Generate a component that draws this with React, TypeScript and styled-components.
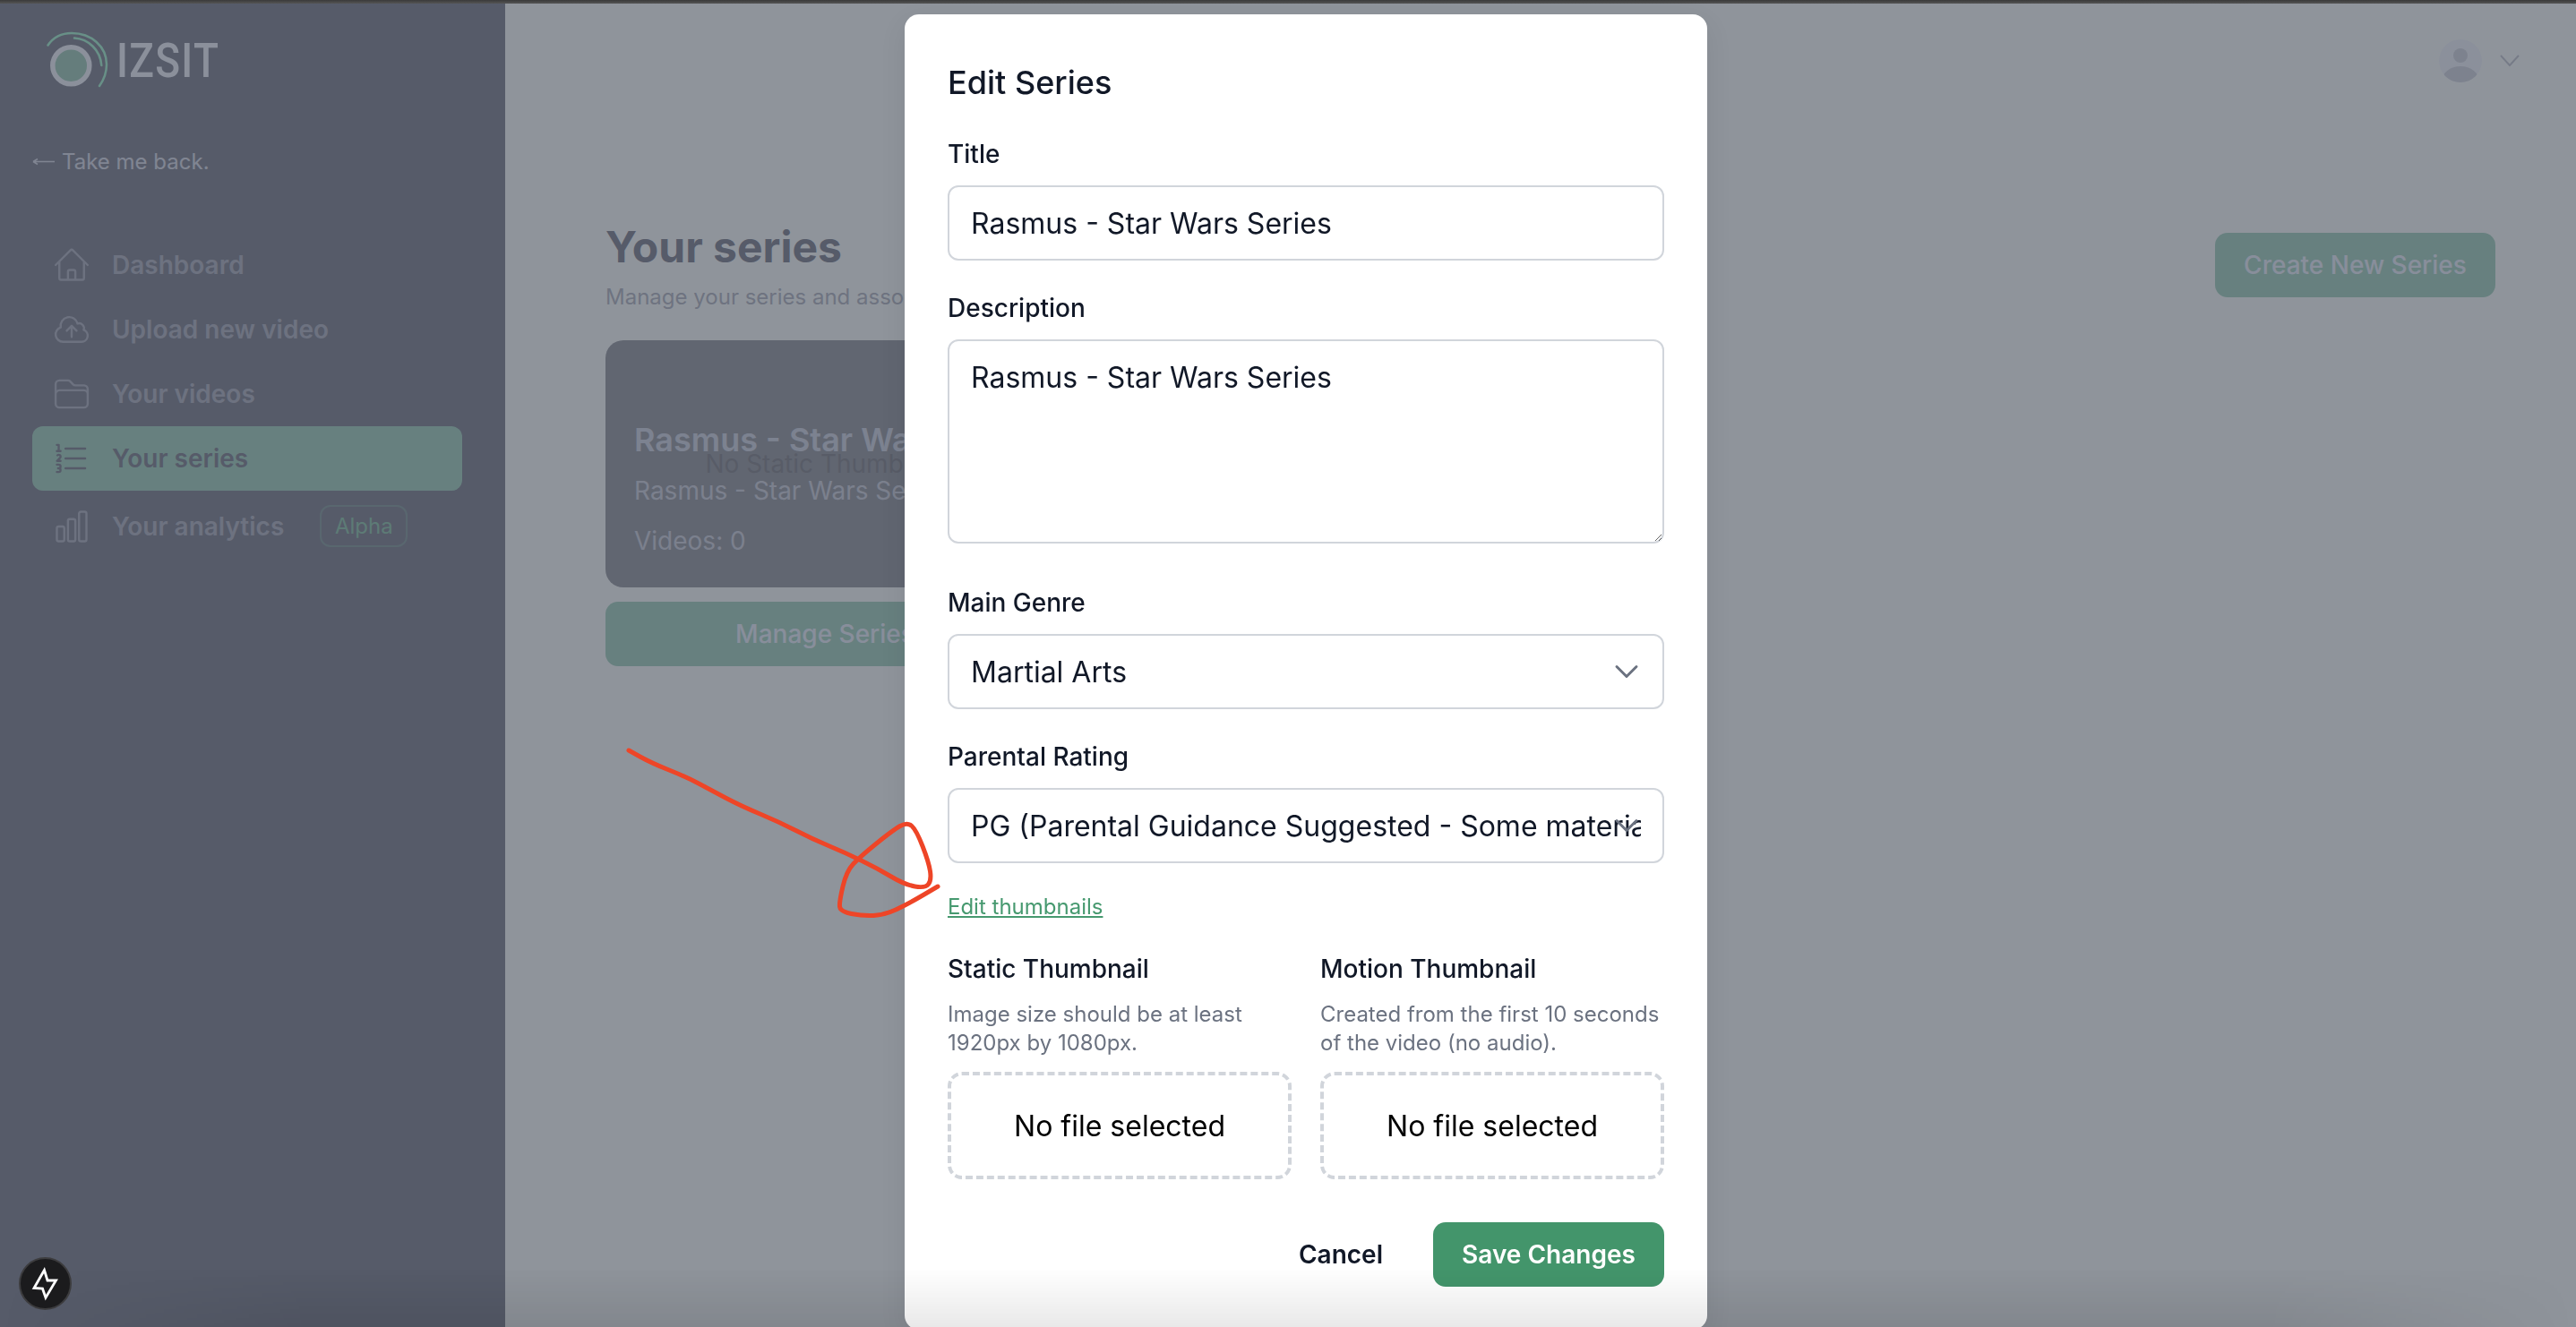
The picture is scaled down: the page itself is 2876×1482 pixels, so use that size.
import styled, { createGlobalStyle } from 'styled-components';
import {
  HiOutlineHome,
  HiOutlineCloudArrowUp,
  HiOutlineFolder,
  HiOutlineNumberedList,
  HiOutlineChartBar,
} from 'react-icons/hi2';
import { ChevronDown } from 'lucide-react';

// page colours sit under a 50% overlay, so they look much lighter here than in the picture
const GlobalStyle = createGlobalStyle`
  html, body {
    margin: 0;
    height: 100%;
    overflow: hidden;
    background: #fff;
    font-family: Inter, "Noto Sans", sans-serif;
  }
  * {
    box-sizing: border-box;
  }
`;

const TopStrip = styled.div`
  height: 4px;
  background: linear-gradient(#3a3a3a, #555);
`;

const Shell = styled.div`
  display: flex;
  height: 1478px;
`;

const Sidebar = styled.aside`
  width: 564px;
  flex-shrink: 0;
  padding: 30px 48px 0 36px;
  background: rgb(141, 141, 155);
`;

const LogoRow = styled.div`
  display: flex;
  align-items: center;
  gap: 8px;
  padding-left: 16px;
  height: 66px;
`;

const LogoText = styled.span`
  display: inline-block;
  font-family: Roboto, sans-serif;
  font-size: 54px;
  font-weight: 500;
  letter-spacing: 1.5px;
  color: rgb(247, 247, 255);
  transform: scaleX(0.85);
  transform-origin: left center;
`;

const BackLink = styled.div`
  display: flex;
  align-items: center;
  gap: 7px;
  margin: 64px 0;
  height: 32px;
  font-size: 24px;
  color: rgb(225, 225, 237);
`;

const NavList = styled.nav`
  display: flex;
  flex-direction: column;
`;

const NavRow = styled.div<{ $active?: boolean }>`
  display: flex;
  align-items: center;
  gap: 23px;
  min-height: 72px;
  padding: 0 22px;
  border-radius: 12px;
  font-size: 28px;
  font-weight: 600;
  background: ${(props) => (props.$active ? 'rgb(175, 215, 199)' : 'transparent')};
  color: ${(props) => (props.$active ? 'rgb(141, 141, 155)' : 'rgb(187, 187, 201)')};

  svg {
    width: 44px;
    height: 44px;
    flex-shrink: 0;
    stroke-width: 1.3;
  }
`;

const AlphaBadge = styled.span`
  display: flex;
  align-items: center;
  justify-content: center;
  width: 98px;
  height: 47px;
  margin: 16px 0 16px 17px;
  border: 2px solid rgb(147, 165, 167);
  border-radius: 12px;
  font-size: 24px;
  font-weight: 400;
  color: rgb(155, 205, 180);
`;

const Main = styled.main`
  flex: 1;
  background: #fff;
`;

const TopBar = styled.div`
  display: flex;
  align-items: center;
  justify-content: flex-end;
  gap: 20px;
  height: 128px;
  padding-right: 63px;
`;

const Content = styled.div`
  padding: 108px 90px 0 112px;
`;

const HeaderRow = styled.div`
  display: flex;
  align-items: center;
  justify-content: space-between;
`;

const PageTitle = styled.h1`
  margin: 0;
  font-size: 48px;
  line-height: 72px;
  font-weight: 700;
  color: rgb(141, 141, 155);
`;

const PageSubtitle = styled.p`
  margin: 4px 0 0;
  font-size: 24px;
  line-height: 32px;
  color: rgb(189, 189, 201);
`;

const GreenButton = styled.button<{ $width: string }>`
  display: block;
  width: ${(props) => props.$width};
  height: 72px;
  border: none;
  border-radius: 14px;
  font-family: inherit;
  font-size: 28px;
  font-weight: 500;
  background: rgb(175, 215, 199);
  color: rgb(241, 243, 255);
`;

const CreateSlot = styled.div`
  margin-top: 4px;
`;

const SeriesCard = styled.div`
  position: relative;
  display: flex;
  flex-direction: column;
  justify-content: flex-end;
  width: 490px;
  height: 276px;
  margin: 32px 0 16px;
  padding: 0 32px 34px;
  border-radius: 20px;
  background: rgb(163, 163, 171);
`;

const NoThumb = styled.div`
  position: absolute;
  inset: 0;
  display: flex;
  align-items: center;
  justify-content: center;
  font-size: 28px;
  color: rgb(145, 143, 151);
`;

const CardTitle = styled.div`
  position: relative;
  font-size: 36px;
  line-height: 44px;
  font-weight: 600;
  color: rgb(217, 219, 233);
  white-space: nowrap;
`;

const CardText = styled.div<{ $gap: number }>`
  position: relative;
  margin-top: ${(props) => props.$gap}px;
  font-size: 28px;
  line-height: 36px;
  color: rgb(215, 215, 227);
  white-space: nowrap;
`;

const Overlay = styled.div`
  position: fixed;
  inset: 4px 0 0;
  display: flex;
  justify-content: center;
  align-items: flex-start;
  padding: 12px 0 0 40px;
  background: rgba(31, 41, 55, 0.5);
`;

const Modal = styled.form`
  width: 896px;
  flex-shrink: 0;
  padding: 48px;
  border-radius: 16px;
  background: #fff;
  box-shadow: 0 10px 30px rgba(0, 0, 0, 0.08);
  color: #111827;
`;

const ModalTitle = styled.h2`
  margin: 0 0 32px;
  font-size: 36px;
  line-height: 56px;
  font-weight: 500;
`;

const Field = styled.div`
  display: flow-root;
  margin-bottom: 33px;
`;

const Label = styled.label`
  display: block;
  margin-bottom: 15px;
  font-size: 28px;
  line-height: 40px;
  font-weight: 500;
`;

const TextInput = styled.input`
  display: block;
  width: 100%;
  height: 84px;
  padding: 0 24px;
  border: 2px solid #d1d5db;
  border-radius: 12px;
  outline: none;
  font-family: inherit;
  font-size: 32px;
  color: #111827;
  background: #fff;
`;

const TextArea = styled.textarea`
  display: block;
  width: 100%;
  height: 228px;
  margin-bottom: 13px;
  padding: 21px 24px;
  border: 2px solid #d1d5db;
  border-radius: 12px;
  outline: none;
  font-family: inherit;
  font-size: 32px;
  line-height: 40px;
  color: #111827;
`;

const SelectWrap = styled.div`
  position: relative;

  svg {
    position: absolute;
    top: 20px;
    right: 20px;
    width: 44px;
    height: 44px;
    color: #6b7280;
    stroke-width: 1.6;
    pointer-events: none;
  }
`;

const Select = styled.select`
  display: block;
  width: 100%;
  height: 84px;
  padding: 0 24px;
  border: 2px solid #d1d5db;
  border-radius: 12px;
  outline: none;
  appearance: none;
  font-family: inherit;
  font-size: 32px;
  color: #111827;
  background: #fff;
`;

const EditLink = styled.a`
  display: block;
  margin-bottom: 33px;
  font-size: 24px;
  line-height: 32px;
  color: #46996f;
  text-decoration: underline;
`;

const ThumbGrid = styled.div`
  display: grid;
  grid-template-columns: 1fr 1fr;
  gap: 32px;
`;

const ThumbLabel = styled.div`
  margin-bottom: 15px;
  font-size: 28px;
  line-height: 40px;
  font-weight: 500;
`;

const ThumbHelp = styled.p`
  margin: 0 0 16px;
  font-size: 24px;
  line-height: 32px;
  color: #6b7280;
`;

const DropZone = styled.div`
  display: flex;
  align-items: center;
  justify-content: center;
  height: 120px;
  border: 4px dashed #d1d5db;
  border-radius: 16px;
  font-size: 32px;
  color: #000;
`;

const Actions = styled.div`
  display: flex;
  align-items: center;
  justify-content: flex-end;
  gap: 56px;
  margin-top: 48px;
`;

const CancelButton = styled.button`
  border: none;
  padding: 0;
  background: none;
  font-family: inherit;
  font-size: 28px;
  font-weight: 600;
  color: #111827;
`;

const SaveButton = styled.button`
  width: 258px;
  height: 72px;
  border: none;
  border-radius: 14px;
  background: #43956b;
  font-family: inherit;
  font-size: 28px;
  font-weight: 600;
  color: #fff;
`;

// soft shade along the bottom edge of the capture
const BottomShade = styled.div`
  position: fixed;
  left: 0;
  right: 0;
  bottom: 0;
  height: 66px;
  background: linear-gradient(rgba(0, 0, 0, 0), rgba(0, 0, 0, 0.085));
  mask-image: linear-gradient(90deg, transparent 0, #000 12%, #000 88%, transparent 100%);
  pointer-events: none;
`;

const DevBadge = styled.div`
  position: fixed;
  left: 21px;
  bottom: 19px;
  width: 59px;
  height: 59px;
  border: 2px solid #3c3c3e;
  border-radius: 50%;
  background: #1b1b1d;
`;

const Annotation = styled.svg`
  position: fixed;
  left: 680px;
  top: 780px;
  width: 460px;
  height: 280px;
  pointer-events: none;
`;

const inkPoints = [
  [22, 58], [47, 72], [87, 88], [113, 102], [147, 120], [190, 138], [227, 157], [263, 172],
  [300, 190], [330, 208], [353, 212], [360, 203], [357, 183], [343, 147], [333, 138], [317, 147],
  [280, 177], [265, 193], [257, 227], [258, 238], [283, 243], [307, 242], [333, 230], [367, 210],
];

// runs a curve through the midpoints so the hand drawn line has no corners
const inkPath = inkPoints.reduce((d, [x, y], i) => {
  if (i === 0) return `M${x} ${y}`;
  const [px, py] = inkPoints[i - 1];
  return `${d} Q${px} ${py} ${(px + x) / 2} ${(py + y) / 2}`;
}, '') + ' L367 210';

const LogoMark = () => (
  <svg width="70" height="66" viewBox="0 0 70 66" fill="none">
    <circle cx="27.3" cy="39.3" r="20.5" fill="rgb(171,209,193)" stroke="rgb(247,247,255)" strokeWidth="5.5" />
    <path d="M1.5 16.5C8 7 18 3 28 3C50 3 67 18 67 38C67 47 64 55 59 62" stroke="rgb(177,247,215)" strokeWidth="2.5" strokeLinecap="round" />
    <path d="M31 8.5C47 9.5 60 22 61.3 39" stroke="rgb(177,247,215)" strokeWidth="2.5" strokeLinecap="round" />
  </svg>
);

const BackArrow = () => (
  <svg width="26" height="16" viewBox="0 0 26 16" fill="none" stroke="rgb(225,225,237)" strokeWidth="1.5">
    <path d="M1 8.5H25M1 8.5L6 5.5M1 8.5L6 11.5" />
  </svg>
);

const Avatar = () => (
  <svg width="48" height="48" viewBox="0 0 48 48">
    <defs>
      <clipPath id="avatar-clip">
        <circle cx="24" cy="24" r="24" />
      </clipPath>
    </defs>
    <circle cx="24" cy="24" r="24" fill="rgb(247,247,255)" />
    <g clipPath="url(#avatar-clip)" fill="rgb(219,219,229)">
      <circle cx="24" cy="18" r="8" />
      <ellipse cx="24" cy="47" rx="21" ry="17" />
    </g>
  </svg>
);

const TopChevron = () => (
  <svg width="22" height="14" viewBox="0 0 22 14" fill="none" stroke="rgb(205,205,215)" strokeWidth="2">
    <path d="M1 1L11 12L21 1" />
  </svg>
);

const App: React.FC = () => {
  return (
    <>
      <GlobalStyle />
      <TopStrip />
      <Shell>
        <Sidebar>
          <LogoRow>
            <LogoMark />
            <LogoText>IZSIT</LogoText>
          </LogoRow>
          <BackLink>
            <BackArrow />
            Take me back.
          </BackLink>
          <NavList>
            <NavRow>
              <HiOutlineHome />
              Dashboard
            </NavRow>
            <NavRow>
              <HiOutlineCloudArrowUp />
              Upload new video
            </NavRow>
            <NavRow>
              <HiOutlineFolder />
              Your videos
            </NavRow>
            <NavRow $active>
              <HiOutlineNumberedList />
              Your series
            </NavRow>
            <NavRow>
              <HiOutlineChartBar />
              Your analytics
              <AlphaBadge>Alpha</AlphaBadge>
            </NavRow>
          </NavList>
        </Sidebar>
        <Main>
          <TopBar>
            <Avatar />
            <TopChevron />
          </TopBar>
          <Content>
            <HeaderRow>
              <div>
                <PageTitle>Your series</PageTitle>
                <PageSubtitle>Manage your series and associated videos.</PageSubtitle>
              </div>
              <CreateSlot>
                <GreenButton $width="313px">Create New Series</GreenButton>
              </CreateSlot>
            </HeaderRow>
            <SeriesCard>
              <NoThumb>No Static Thumbnail</NoThumb>
              <CardTitle>Rasmus - Star Wars Series</CardTitle>
              <CardText $gap={17}>Rasmus - Star Wars Series</CardText>
              <CardText $gap={20}>Videos: 0</CardText>
            </SeriesCard>
            <GreenButton $width="490px">Manage Series</GreenButton>
          </Content>
        </Main>
      </Shell>

      <Overlay>
        <Modal>
          <ModalTitle>Edit Series</ModalTitle>
          <Field>
            <Label>Title</Label>
            <TextInput defaultValue="Rasmus - Star Wars Series" />
          </Field>
          <Field>
            <Label>Description</Label>
            <TextArea defaultValue="Rasmus - Star Wars Series" />
          </Field>
          <Field>
            <Label>Main Genre</Label>
            <SelectWrap>
              <Select defaultValue="martial">
                <option value="martial">Martial Arts</option>
              </Select>
              <ChevronDown />
            </SelectWrap>
          </Field>
          <Field>
            <Label>Parental Rating</Label>
            <SelectWrap>
              <Select defaultValue="pg">
                <option value="pg">PG (Parental Guidance Suggested - Some material may not be suitable for children)</option>
              </Select>
              <ChevronDown />
            </SelectWrap>
          </Field>
          <EditLink>Edit thumbnails</EditLink>
          <ThumbGrid>
            <div>
              <ThumbLabel>Static Thumbnail</ThumbLabel>
              <ThumbHelp>
                Image size should be at least
                <br />
                1920px by 1080px.
              </ThumbHelp>
              <DropZone>No file selected</DropZone>
            </div>
            <div>
              <ThumbLabel>Motion Thumbnail</ThumbLabel>
              <ThumbHelp>
                Created from the first 10 seconds
                <br />
                of the video (no audio).
              </ThumbHelp>
              <DropZone>No file selected</DropZone>
            </div>
          </ThumbGrid>
          <Actions>
            <CancelButton type="button">Cancel</CancelButton>
            <SaveButton type="button">Save Changes</SaveButton>
          </Actions>
        </Modal>
      </Overlay>

      <BottomShade />

      <DevBadge>
        <svg width="55" height="55" viewBox="0 0 55 55" fill="none" stroke="#fff" strokeWidth="2.8" strokeLinejoin="miter">
          <path d="M26.5 12.5L15 32.5L24.5 33.2L28 43.2L39.5 24L30 24Z" />
        </svg>
      </DevBadge>

      <Annotation viewBox="0 0 460 280" fill="none">
        <path d={inkPath} stroke="#ee4527" strokeWidth="5" strokeLinecap="round" strokeLinejoin="round" />
      </Annotation>
    </>
  );
};

export default App;
